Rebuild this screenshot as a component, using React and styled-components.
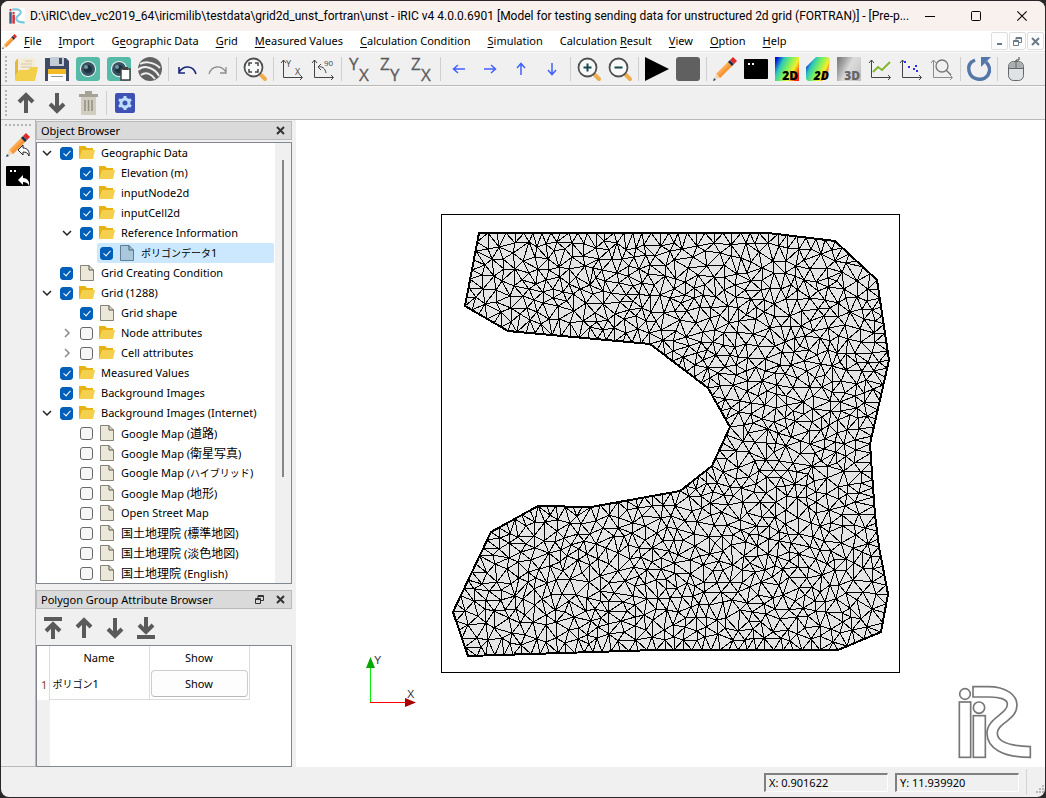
import React, { useMemo } from "react";
import styled, { createGlobalStyle } from "styled-components";

const Global = createGlobalStyle`
  * { box-sizing: border-box; }
  html, body, #root { height: 100%; }
  body {
    margin: 0;
    background: #2b2628;
    color: #000;
    font: 11px/16px "Noto Sans", "Noto Sans CJK JP", sans-serif;
  }
  button { font: inherit; color: inherit; padding: 0; border: 0; background: none; }
  svg { display: block; overflow: visible; }
`;

/* ---------- window frame ---------- */

const Desktop = styled.div`
  height: 100vh;
  padding: 1px;
`;

const Window = styled.div`
  height: 100%;
  display: flex;
  flex-direction: column;
  overflow: hidden;
  border-radius: 8px;
  background: #f0f0f0;
`;

const TitleBar = styled.header`
  display: flex;
  align-items: center;
  height: 30px;
  flex: none;
  padding-left: 8px;
  gap: 5px;
  background: #f9f1ee;
`;

const TitleText = styled.h1`
  margin: 0;
  flex: 1;
  min-width: 0;
  font: 400 12px/16px Roboto, "Noto Sans", sans-serif;
  white-space: nowrap;
`;

const CaptionButton = styled.button`
  width: 46px;
  height: 30px;
  display: grid;
  place-items: center;
`;

const CaptionButtons = styled.div`
  display: flex;
  flex: none;
`;

const MenuBar = styled.nav`
  display: flex;
  align-items: center;
  flex: none;
  height: 21px;
  padding: 0 1px;
  background: #fff;
  border-bottom: 1px solid #e4e4e4;
`;

const MenuList = styled.div`
  display: flex;
  flex: 1;
  gap: 17px;
  padding-left: 7px;
`;

const MenuItem = styled.button`
  white-space: nowrap;
  u { text-underline-offset: 2px; }
`;

const ChildButtons = styled.div`
  display: flex;
  gap: 1px;
`;

const ChildButton = styled.button`
  width: 17px;
  height: 18px;
  display: grid;
  place-items: center;
  border: 1px solid #dedede;
  border-radius: 2px;
  background: #fdfdfd;
`;

/* ---------- toolbars ---------- */

const Toolbar = styled.div`
  display: flex;
  align-items: center;
  flex: none;
  height: 34px;
  padding-left: 4px;
  border-top: 1px solid #fafafa;
  border-bottom: 1px solid #b9b9b9;
`;

const Grip = styled.div`
  width: 2px;
  height: 26px;
  margin-right: 7px;
  background: repeating-linear-gradient(#b4b4b4 0 2px, transparent 2px 4px);
`;

const ToolGroup = styled.div`
  display: flex;
  gap: 7px;
`;

const ToolButton = styled.button`
  width: 24px;
  height: 24px;
`;

const Separator = styled.div`
  width: 1px;
  height: 24px;
  margin: 0 6px;
  background: #cfcfcf;
`;

const Workspace = styled.div`
  display: flex;
  flex: 1;
  min-height: 0;
`;

const SideBar = styled.div`
  display: flex;
  flex-direction: column;
  align-items: center;
  flex: none;
  width: 35px;
  padding-top: 4px;
  gap: 7px;
  border-right: 1px solid #b9b9b9;
  border-bottom: 1px solid #b9b9b9;
`;

const SideGrip = styled.div`
  width: 26px;
  height: 2px;
  background: repeating-linear-gradient(90deg, #b4b4b4 0 2px, transparent 2px 4px);
`;

/* ---------- docks ---------- */

const Docks = styled.aside`
  display: flex;
  flex-direction: column;
  flex: none;
  width: 256px;
  margin-right: 4px;
  padding-top: 1px;
`;

const DockTitle = styled.div`
  display: flex;
  align-items: center;
  flex: none;
  height: 19px;
  padding: 0 6px 0 4px;
  gap: 12px;
  border: 1px solid #bababa;
  background: #dadada;
`;

const DockName = styled.h2`
  flex: 1;
  margin: 0;
  font-size: 11px;
  font-weight: 400;
  white-space: nowrap;
`;

const TreeFrame = styled.div`
  display: flex;
  flex: 1;
  min-height: 0;
  margin: 2px 0 6px;
  overflow: hidden;
  border: 1px solid #828790;
  background: #fff;
`;

const Tree = styled.ul`
  flex: 1;
  margin: 0;
  padding: 0;
  list-style: none;
`;

const TreeRow = styled.li`
  display: flex;
  height: 20px;
  padding-left: ${(p) => p.$level * 20}px;
`;

const Expander = styled.div`
  width: 20px;
  flex: none;
  display: grid;
  place-items: center;
`;

const TreeItem = styled.label`
  display: flex;
  flex: 1;
  align-items: center;
  padding-left: 3px;
  margin-right: 1px;
  border-radius: 2px;
  white-space: nowrap;
  background: ${(p) => (p.$selected ? "#cce8ff" : "transparent")};
  svg { margin: 0 5px 0 6px; flex: none; }
`;

const CheckBox = styled.input`
  appearance: none;
  position: relative;
  flex: none;
  width: 13px;
  height: 13px;
  margin: 0;
  border: 1px solid #666;
  border-radius: 3px;
  background: #f6f6f6;
  &:checked { border-color: #005fb8; background: #005fb8; }
  &:checked::after {
    content: "";
    position: absolute;
    left: 4px;
    top: 1px;
    width: 3px;
    height: 6px;
    border: solid #fff;
    border-width: 0 1px 1px 0;
    transform: rotate(42deg);
  }
`;

const Kanji = styled.span`
  font-size: 12px;
  font-family: "Noto Sans CJK JP", sans-serif;
`;

const Kana = styled.span`
  font-size: 10px;
  font-family: "Noto Sans CJK JP", sans-serif;
`;

const ScrollTrack = styled.div`
  width: 16px;
  flex: none;
  padding: 17px 7px 0;
  background: #f0f0f0;
`;

const ScrollThumb = styled.div`
  width: 2px;
  height: 75%;
  background: #868686;
`;

const DockTools = styled.div`
  display: flex;
  align-items: center;
  flex: none;
  height: 36px;
  padding: 2px 0 0 5px;
  gap: 7px;
`;

const TableFrame = styled.div`
  display: flex;
  flex: none;
  height: 122px;
  border: 1px solid #828790;
  background: linear-gradient(90deg, #f0f0f0 13px, #fff 13px);
`;

const Table = styled.table`
  width: 212px;
  align-self: flex-start;
  table-layout: fixed;
  border-collapse: collapse;
  background: #fff;
`;

const HeadCell = styled.th`
  width: ${(p) => (p.$narrow ? 12 : 100)}px;
  height: 23px;
  padding: 0;
  font-weight: 400;
  border-right: 1px solid #dcdcdc;
`;

const RowHead = styled.th`
  padding: 2px 0 0 4px;
  font-weight: 400;
  text-align: left;
  color: #7b4a1c;
`;

const Cell = styled.td`
  height: 30px;
  padding: ${(p) => (p.$flush ? "1px" : "0 3px")};
  border: 1px solid #dcdcdc;
  border-top: 0;
`;

const ShowButton = styled.button`
  display: block;
  width: 97px;
  height: 27px;
  border: 1px solid #cdcdcd;
  border-bottom-color: #b8b8b8;
  border-radius: 4px;
  background: #fdfdfd;
`;

/* ---------- canvas and status bar ---------- */

const View = styled.main`
  position: relative;
  flex: 1;
  min-width: 0;
  background: #fff;
`;

const MeshDrawing = styled.svg`
  width: 100%;
  height: 100%;
`;

const Watermark = styled.svg`
  position: absolute;
  right: 13px;
  bottom: 8px;
  width: 74px;
  height: 74px;
`;

const StatusBar = styled.footer`
  display: flex;
  align-items: center;
  justify-content: flex-end;
  flex: none;
  height: 30px;
  gap: 7px;
`;

const StatusField = styled.output`
  width: 124px;
  height: 19px;
  padding: 0 3px;
  border: 1px solid #fff;
  border-top: 2px solid #808080;
  border-left: 2px solid #808080;
`;

const StatusEnd = styled.div`
  display: flex;
  align-items: flex-end;
  justify-content: flex-end;
  width: 19px;
  height: 26px;
  border-left: 1px solid #d4d4d4;
`;

/* ---------- mesh ---------- */

const OUTLINE = [
  [183, 113], [472, 113], [539, 121], [581, 160], [593, 240], [574, 324],
  [579, 395], [583, 427], [592, 474], [585, 512], [542, 530], [360, 530],
  [172, 536], [157, 492], [195, 412], [242, 386], [295, 387], [384, 371],
  [416, 346], [434, 307], [412, 268], [354, 224], [212, 211], [169, 186],
];
const NODE_COUNT = 1288;

const inside = (x, y) => {
  let hit = false;
  for (let i = 0, j = OUTLINE.length - 1; i < OUTLINE.length; j = i++) {
    const [xi, yi] = OUTLINE[i];
    const [xj, yj] = OUTLINE[j];
    if (yi > y !== yj > y && x < ((xj - xi) * (y - yi)) / (yj - yi) + xi) hit = !hit;
  }
  return hit;
};

function scatterNodes() {
  const nodes = [];
  OUTLINE.forEach(([x, y], i) => {
    const [nx, ny] = OUTLINE[(i + 1) % OUTLINE.length];
    const steps = Math.max(1, Math.round(Math.hypot(nx - x, ny - y) / 9));
    for (let k = 0; k < steps; k++) {
      nodes.push([x + ((nx - x) * k) / steps, y + ((ny - y) * k) / steps]);
    }
  });
  let seed = 20191;
  const random = () => {
    seed = (seed * 1664525 + 1013904223) % 4294967296;
    return seed / 4294967296;
  };
  let spacing = 9.4;
  for (let tries = 0; tries < 24000 && nodes.length < NODE_COUNT; tries++) {
    if (tries % 6000 === 5999) spacing -= 0.25;
    const x = 157 + random() * 436;
    const y = 113 + random() * 423;
    if (!inside(x, y)) continue;
    if (nodes.every(([a, b]) => (a - x) ** 2 + (b - y) ** 2 > spacing * spacing)) nodes.push([x, y]);
  }
  return nodes;
}

function triangulate(nodes) {
  const pts = [...nodes.map(([x, y], i) => [x + ((i * 7) % 11) * 0.001, y + ((i * 5) % 13) * 0.001]),
    [-4000, -3000], [5000, -3000], [400, 6000]];
  const n = nodes.length;
  const make = (a, b, c) => {
    const [ax, ay] = pts[a];
    const [bx, by] = pts[b];
    const [cx, cy] = pts[c];
    const d = 2 * (ax * (by - cy) + bx * (cy - ay) + cx * (ay - by));
    const A = ax * ax + ay * ay;
    const B = bx * bx + by * by;
    const C = cx * cx + cy * cy;
    const x = (A * (by - cy) + B * (cy - ay) + C * (ay - by)) / d;
    const y = (A * (cx - bx) + B * (ax - cx) + C * (bx - ax)) / d;
    return { v: [a, b, c], x, y, r: (ax - x) ** 2 + (ay - y) ** 2 };
  };
  let tris = [make(n, n + 1, n + 2)];
  for (let i = 0; i < n; i++) {
    const [x, y] = pts[i];
    const edges = new Map();
    const keep = [];
    for (const t of tris) {
      if ((t.x - x) ** 2 + (t.y - y) ** 2 < t.r) {
        for (let k = 0; k < 3; k++) {
          const a = t.v[k];
          const b = t.v[(k + 1) % 3];
          const key = a < b ? a * 10000 + b : b * 10000 + a;
          if (edges.has(key)) edges.delete(key);
          else edges.set(key, [a, b]);
        }
      } else keep.push(t);
    }
    edges.forEach(([a, b]) => keep.push(make(a, b, i)));
    tris = keep;
  }
  return tris.filter(({ v }) => v.every((k) => k < n)
    && inside((pts[v[0]][0] + pts[v[1]][0] + pts[v[2]][0]) / 3, (pts[v[0]][1] + pts[v[1]][1] + pts[v[2]][1]) / 3));
}

function meshPath() {
  const nodes = scatterNodes();
  const seen = new Set();
  let d = "";
  triangulate(nodes).forEach(({ v }) => {
    for (let k = 0; k < 3; k++) {
      const a = Math.min(v[k], v[(k + 1) % 3]);
      const b = Math.max(v[k], v[(k + 1) % 3]);
      const key = a * 10000 + b;
      if (seen.has(key)) continue;
      seen.add(key);
      const [p, q] = [nodes[a], nodes[b]];
      d += `M${Math.round(p[0])} ${Math.round(p[1])}L${Math.round(q[0])} ${Math.round(q[1])}`;
    }
  });
  return d;
}

function MeshView() {
  const mesh = useMemo(meshPath, []);
  const outline = OUTLINE.map((p) => p.join(",")).join(" ");
  return (
    <MeshDrawing viewBox="0 0 749 647" role="img" aria-label="Grid">
      <g shapeRendering="crispEdges" fill="none" stroke="#000">
        <rect x="145.5" y="94.5" width="458" height="458" />
        <polygon points={outline} fill="#e5e5e5" stroke="none" />
        <path d={mesh} />
        <polygon points={outline} strokeWidth="2" />
        <path d="M74.5 582V545" stroke="#00f000" />
        <path d="M74 582.5H110" stroke="#f00" />
      </g>
      <path d="M74.500 537L79 548H70Z" fill="#00a800" />
      <path d="M120 582.500L109 578V587Z" fill="#a80000" />
      <g fill="#333" fontFamily="Liberation Sans, sans-serif" fontSize="11">
        <text x="78" y="544">Y</text>
        <text x="111" y="578">X</text>
      </g>
    </MeshDrawing>
  );
}

const R_SHAPE = "M700 50H745C800 50 832 75 832 105C832 130 815 143 800 155C785 167 773 175 773 190C773 215 810 228 872 230V262C790 262 742 235 742 190C742 165 760 150 778 136C795 122 803 115 803 102C803 88 780 80 745 81H700Z";

function LogoShapes() {
  return (
    <>
      <g className="i">
        <circle cx="676" cy="72" r="16" />
        <rect x="659" y="96" width="34" height="166" />
        <circle cx="718" cy="113" r="17" />
        <rect x="701" y="137" width="36" height="125" />
      </g>
      <path d={R_SHAPE} className="r" />
    </>
  );
}

const AppLogo = styled.svg`
  width: 16px;
  height: 16px;
  flex: none;
  background: #fff;
  .i rect:nth-of-type(1) { fill: #2f5d8c; }
  .i { fill: #d8343c; }
  .r { fill: #7cc8e0; }
`;

/* ---------- icons ---------- */

const Icon = ({ children, size = 24 }) => (
  <svg width={size} height={size} viewBox="0 0 24 24" fill="none" aria-hidden="true">{children}</svg>
);

const Pencil = () => (
  <>
    <path d="M3 17L16 4L20 8L7 21Z" fill="#ffa94d" />
    <path d="M5 19L18 6L20 8L7 21Z" fill="#f5953a" />
    <path d="M3 17L7 21L1 23Z" fill="#f3d9b5" />
    <path d="M1 21L0 24L3 23Z" fill="#1d4a6b" />
    <path d="M15 5L17 3L21 7L19 9Z" fill="#15304d" />
    <path d="M17 3L20 0L24 4L21 7Z" fill="#e02a2a" />
  </>
);
const Axes = ({ color = "#444" }) => (
  <path d="M3.500 3V20.500H22M1 6L3.500 3L6 6M20 18L22.500 20.500L20 23" stroke={color} />
);
const Arrow = ({ turn = 0 }) => (
  <path d="M12 22V4M5 11L12 4L19 11" stroke="#5a5a5a" strokeWidth="4" transform={`rotate(${turn} 12 12)`} />
);
const BlueArrow = ({ turn }) => (
  <path d="M12 18V7M8 11L12 6.500L16 11" stroke="#4262ff" strokeWidth="1.500" transform={`rotate(${turn} 12 12)`} />
);
const Lens = ({ children }) => (
  <>
    <path d="M17 17L22 22" stroke="#f0ad4e" strokeWidth="4" strokeLinecap="round" />
    <circle cx="10.500" cy="10.500" r="9" fill="#f7f9f9" stroke="#505050" strokeWidth="1.800" />
    {children}
  </>
);
const Camera = () => (
  <>
    <rect width="24" height="24" rx="3" fill="#55bba8" />
    <circle cx="12" cy="12" r="8" fill="#f3f3f3" />
    <circle cx="12" cy="12" r="7" fill="#365563" />
    <circle cx="12" cy="12" r="4" fill="#1d3340" />
    <circle cx="10" cy="10" r="2" fill="#7897a5" />
  </>
);
const TwoLetters = ({ a, b }) => (
  <g fill="#5c5c5c" stroke="#5c5c5c" strokeWidth="0.3" fontFamily="Open Sans, sans-serif" fontSize="17">
    <text x="1" y="13">{a}</text>
    <text x="11" y="24">{b}</text>
  </g>
);
const Spectrum = ({ id, grey }) => (
  <linearGradient id={id} x1="0" y1="0.200" x2="1" y2="0.700">
    {(grey ? ["#808080", "#a8a8a8", "#dcdcdc", "#d2d2d2", "#c0c0c0"] : ["#0010e0", "#2fc8b8", "#7cf060", "#f4f028", "#ff2010"])
      .map((c, i) => <stop key={c} offset={i / 4} stopColor={c} />)}
  </linearGradient>
);
const DimLabel = ({ children, color = "#000", slant }) => (
  <text x="23" y="23" textAnchor="end" fill={color} fontFamily="Open Sans, sans-serif" fontSize="12" fontWeight="800" fontStyle={slant ? "italic" : "normal"}>{children}</text>
);
const Console = () => (
  <>
    <rect y="2" width="24" height="20" rx="1" fill="#000" />
    <path d="M4 6H6V8H4ZM8 6H10V8H8Z" fill="#fff" />
  </>
);

const ICONS = {
  open: (
    <>
      <path d="M1 5L3 2H9L11 5V22H1Z" fill="#e2b73a" />
      <path d="M4 1H21V18H4Z" fill="#f4ecd8" />
      <path d="M11 4H18M7 7H18M7 10H18" stroke="#d8c8a4" />
      <path d="M1 23V19L5 13H14L17 10H24L21 24H2Z" fill="#f2d04c" />
    </>
  ),
  save: (
    <>
      <path d="M0 1H21L24 4V24H0Z" fill="#3f4a66" />
      <path d="M5 0H19V9H5Z" fill="#c4ccd4" />
      <path d="M14 1H17V7H14Z" fill="#3f4a66" />
      <path d="M3 12H21V24H3Z" fill="#fff" />
      <path d="M3 12H21V17H3Z" fill="#f2bb25" />
      <path d="M6 19.500H18" stroke="#8a93a0" />
    </>
  ),
  camera: <Camera />,
  cameraCopy: (
    <>
      <Camera />
      <path d="M14 12H23V23H14Z" fill="#fff" stroke="#444" strokeWidth="1.500" />
      <path d="M16 10H21V13H16Z" fill="#444" />
    </>
  ),
  earth: (
    <>
      <circle cx="12" cy="12" r="12" fill="#626262" />
      <path d="M2 7C7 4 16 5 22 11M0 13C6 7 17 11 21 19M3 18C8 14 13 17 17 22" stroke="#f0f0f0" strokeWidth="2" />
    </>
  ),
  undo: <path d="M4 10V16H10M4 15C9 8 18 8 21 17" stroke="#16267e" strokeWidth="1.600" />,
  redo: <path d="M20 10V16H14M20 15C15 8 6 8 3 17" stroke="#8d8d8d" strokeWidth="1.300" />,
  fit: (
    <Lens>
      <path d="M6 9V6H9M12 6H15V9M15 12V15H12M9 15H6V12" stroke="#444" strokeWidth="1.500" />
    </Lens>
  ),
  xy: (
    <>
      <Axes />
      <g fill="#444" fontFamily="Open Sans, sans-serif" fontSize="9">
        <text x="6" y="10">Y</text>
        <text x="15" y="18">X</text>
      </g>
    </>
  ),
  rotate90: (
    <>
      <Axes />
      <path d="M15 16C14 11 11 9 7 10M10 7L7 10L10 13" stroke="#444" />
      <text x="13" y="9" fill="#444" fontFamily="Open Sans, sans-serif" fontSize="8">90</text>
    </>
  ),
  yx: <TwoLetters a="Y" b="X" />,
  zy: <TwoLetters a="Z" b="Y" />,
  zx: <TwoLetters a="Z" b="X" />,
  left: <BlueArrow turn={270} />,
  right: <BlueArrow turn={90} />,
  up: <BlueArrow turn={0} />,
  down: <BlueArrow turn={180} />,
  zoomIn: <Lens><path d="M6.500 10.500H14.500M10.500 6.500V14.500" stroke="#17494d" strokeWidth="2" /></Lens>,
  zoomOut: <Lens><path d="M6.500 10.500H14.500" stroke="#17494d" strokeWidth="2" /></Lens>,
  play: <path d="M0 0L24 12L0 24Z" fill="#000" />,
  stop: <rect width="24" height="24" rx="3" fill="#606060" />,
  pencil: <Pencil />,
  console: <Console />,
  post2d: (
    <>
      <Spectrum id="spectrum" />
      <path d="M0 0H24V24H0Z" fill="url(#spectrum)" />
      <DimLabel>2D</DimLabel>
    </>
  ),
  post2dBird: (
    <>
      <Spectrum id="spectrumBird" />
      <path d="M10 0H22L24 2L22 17L16 24H2L0 22V10Z" fill="url(#spectrumBird)" />
      <DimLabel slant>2D</DimLabel>
    </>
  ),
  post3d: (
    <>
      <Spectrum id="greys" grey />
      <path d="M0 0H24V24H0Z" fill="url(#greys)" />
      <DimLabel color="#666">3D</DimLabel>
    </>
  ),
  chart: <><Axes /><path d="M5 15L10 10L14 13L22 5" stroke="#7fb82e" strokeWidth="2" /></>,
  scatter: <><Axes /><path d="M5 4H7V6H5ZM9 9H11V11H9ZM14 11H16V13H14ZM16 8H18V10H16ZM17 13H19V15H17Z" fill="#2b30e8" /></>,
  verify: (
    <>
      <Axes color="#8c8c8c" />
      <circle cx="12" cy="9" r="6" stroke="#777" strokeWidth="1.300" />
      <path d="M16 13L21 18" stroke="#777" strokeWidth="1.500" />
    </>
  ),
  reload: (
    <>
      <path d="M8 3C3 5 1 9 2 14C4 23 16 25 21 18C24 13 22 8 19 5" stroke="#5576a8" strokeWidth="3.500" />
      <path d="M14 0H24L14 10Z" fill="#5576a8" />
    </>
  ),
  mouse: (
    <>
      <path d="M12 6V3H15V0" stroke="#444" />
      <rect x="4.500" y="4.500" width="15" height="19" rx="5" fill="#dfe3e5" stroke="#666" />
      <path d="M5 11V8Q6 5 9 5H15Q19 5 19 11Z" fill="#a9aeb0" />
      <path d="M4.500 11.500H19.500M12 5V11" stroke="#666" />
    </>
  ),
  moveUp: <Arrow />,
  moveDown: <Arrow turn={180} />,
  trash: (
    <>
      <path d="M5 6H20V24H5Z" fill="#d0cec0" />
      <path d="M3 3H22V6H3ZM9 0H16V3H9Z" fill="#a5a395" />
      <path d="M9 9V20M12.500 9V20M16 9V20" stroke="#948e80" strokeWidth="1.500" />
    </>
  ),
  gear: (
    <>
      <rect x="2" y="2" width="20" height="20" rx="2" fill="#3f51b5" />
      <circle cx="12" cy="12" r="4" stroke="#bbdefb" strokeWidth="3" />
      <path d="M12 5V8M12 16V19M5.900 8.500L8.500 10M15.500 14L18.100 15.500M5.900 15.500L8.500 14M15.500 10L18.100 8.500" stroke="#bbdefb" strokeWidth="3" />
    </>
  ),
  pencilBack: (
    <>
      <Pencil />
      <path d="M12 17L17 12V15C21 15 24 18 23 23C22 20 20 19 17 19V22Z" fill="#fff" stroke="#222" />
    </>
  ),
  consoleBack: (
    <>
      <Console />
      <path d="M12 16L17 11V14C21 14 24 17 23 22C22 19 20 18 17 18V21Z" fill="#fff" />
    </>
  ),
  toTop: (
    <>
      <path d="M3 3H21" stroke="#5a5a5a" strokeWidth="4" />
      <path d="M12 23V8M5 15L12 8L19 15" stroke="#5a5a5a" strokeWidth="4" />
    </>
  ),
  toBottom: (
    <>
      <path d="M3 21H21" stroke="#5a5a5a" strokeWidth="4" />
      <path d="M12 1V16M5 9L12 16L19 9" stroke="#5a5a5a" strokeWidth="4" />
    </>
  ),
};

const MAIN_TOOLS = [
  ["open", "save", "camera", "cameraCopy", "earth"],
  ["undo", "redo"],
  ["fit"],
  ["xy", "rotate90"],
  ["yx", "zy", "zx"],
  ["left", "right", "up", "down"],
  ["zoomIn", "zoomOut"],
  ["play", "stop"],
  ["pencil", "console", "post2d", "post2dBird", "post3d", "chart", "scatter", "verify"],
  ["reload"],
  ["mouse"],
];
const EDIT_TOOLS = [["moveUp", "moveDown", "trash"], ["gear"]];

const Tool = ({ name }) => (
  <ToolButton type="button" aria-label={name}><Icon>{ICONS[name]}</Icon></ToolButton>
);

const ToolbarRow = ({ groups }) => (
  <Toolbar role="toolbar">
    <Grip />
    {groups.map((names, i) => (
      <React.Fragment key={names[0]}>
        {i > 0 && <Separator />}
        <ToolGroup>{names.map((name) => <Tool key={name} name={name} />)}</ToolGroup>
      </React.Fragment>
    ))}
  </Toolbar>
);

const Folder = () => (
  <svg width="17" height="14" viewBox="0 0 17 14" aria-hidden="true">
    <path d="M0 0H6L8 2H14V13H0Z" fill="#e8b214" />
    <path d="M3 4H16L14 13H0Z" fill="#f4d04e" />
  </svg>
);
const Sheet = ({ blue }) => (
  <svg width="17" height="17" viewBox="0 0 17 17" aria-hidden="true">
    <path d="M1.500 0.500H10L14.500 5V15.500H1.500Z" fill={blue ? "#a9c8dc" : "#ece8d9"} stroke={blue ? "#5d7f96" : "#858478"} />
    <path d="M10 0.500V5H14.500" fill="none" stroke={blue ? "#44606f" : "#55554d"} />
  </svg>
);
const Chevron = ({ open }) => (
  <svg width="10" height="10" viewBox="0 0 10 10" fill="none" aria-hidden="true">
    {open
      ? <path d="M1 3L5 7L9 3" stroke="#222" strokeWidth="1.500" />
      : <path d="M3 1L7 5L3 9" stroke="#8a8a8a" strokeWidth="1.500" />}
  </svg>
);
const Cross = ({ size = 9, width = 2, color = "#333" }) => (
  <svg width={size} height={size} viewBox="0 0 9 9" aria-hidden="true">
    <path d="M1 1L8 8M8 1L1 8" stroke={color} strokeWidth={width} />
  </svg>
);
const Restore = ({ color = "#333" }) => (
  <svg width="9" height="9" viewBox="0 0 9 9" fill="none" stroke={color} aria-hidden="true">
    <path d="M3 3V0.500H8.500V5.500H6M3 1.500H8M0.500 3.500H5.500V8.500H0.500ZM1 4.500H5" />
  </svg>
);

const TREE = [
  { level: 0, open: true, on: true, folder: true, text: "Geographic Data" },
  { level: 1, on: true, folder: true, text: "Elevation (m)" },
  { level: 1, on: true, folder: true, text: "inputNode2d" },
  { level: 1, on: true, folder: true, text: "inputCell2d" },
  { level: 1, open: true, on: true, folder: true, text: "Reference Information" },
  { level: 2, on: true, selected: true, text: <span><Kana>ポリゴンデータ</Kana>1</span> },
  { level: 0, on: true, text: "Grid Creating Condition" },
  { level: 0, open: true, on: true, folder: true, text: "Grid (1288)" },
  { level: 1, on: true, text: "Grid shape" },
  { level: 1, open: false, folder: true, text: "Node attributes" },
  { level: 1, open: false, folder: true, text: "Cell attributes" },
  { level: 0, on: true, folder: true, text: "Measured Values" },
  { level: 0, on: true, folder: true, text: "Background Images" },
  { level: 0, open: true, on: true, folder: true, text: "Background Images (Internet)" },
  { level: 1, text: <span>Google Map (<Kanji>道路</Kanji>)</span> },
  { level: 1, text: <span>Google Map (<Kanji>衛星写真</Kanji>)</span> },
  { level: 1, text: <span>Google Map (<Kana>ハイブリッド</Kana>)</span> },
  { level: 1, text: <span>Google Map (<Kanji>地形</Kanji>)</span> },
  { level: 1, text: "Open Street Map" },
  { level: 1, text: <span><Kanji>国土地理院</Kanji> (<Kanji>標準地図</Kanji>)</span> },
  { level: 1, text: <span><Kanji>国土地理院</Kanji> (<Kanji>淡色地図</Kanji>)</span> },
  { level: 1, text: <span><Kanji>国土地理院</Kanji> (English)</span> },
];

const MENUS = [
  ["", "F", "ile"], ["", "I", "mport"], ["G", "e", "ographic Data"], ["", "G", "rid"],
  ["", "M", "easured Values"], ["", "C", "alculation Condition"], ["", "S", "imulation"],
  ["Calculation ", "R", "esult"], ["", "V", "iew"], ["", "O", "ption"], ["", "H", "elp"],
];

export default function App() {
  return (
    <Desktop>
      <Global />
      <Window>
        <TitleBar>
          <AppLogo viewBox="655 45 222 222"><LogoShapes /></AppLogo>
          <TitleText>
            {"D:\\iRIC\\dev_vc2019_64\\iricmilib\\testdata\\grid2d_unst_fortran\\unst - iRIC v4 4.0.0.6901 [Model for testing sending data for unstructured 2d grid (FORTRAN)] - [Pre-p..."}
          </TitleText>
          <CaptionButtons>
            <CaptionButton type="button" aria-label="Minimize">
              <svg width="10" height="10"><path d="M0 5.500H10" stroke="#000" /></svg>
            </CaptionButton>
            <CaptionButton type="button" aria-label="Maximize">
              <svg width="10" height="10"><rect x="0.500" y="0.500" width="9" height="9" rx="1" fill="none" stroke="#000" /></svg>
            </CaptionButton>
            <CaptionButton type="button" aria-label="Close"><Cross size={12} width={0.8} color="#000" /></CaptionButton>
          </CaptionButtons>
        </TitleBar>

        <MenuBar>
          <Icon size={15}><Pencil /></Icon>
          <MenuList>
            {MENUS.map(([pre, key, post]) => (
              <MenuItem type="button" key={pre + key + post}>{pre}<u>{key}</u>{post}</MenuItem>
            ))}
          </MenuList>
          <ChildButtons>
            <ChildButton type="button" aria-label="Minimize view">
              <svg width="9" height="9"><path d="M2 7H7" stroke="#6b7a8a" strokeWidth="2" /></svg>
            </ChildButton>
            <ChildButton type="button" aria-label="Restore view"><Restore color="#6b7a8a" /></ChildButton>
            <ChildButton type="button" aria-label="Close view"><Cross color="#6b7a8a" /></ChildButton>
          </ChildButtons>
        </MenuBar>

        <ToolbarRow groups={MAIN_TOOLS} />
        <ToolbarRow groups={EDIT_TOOLS} />

        <Workspace>
          <SideBar>
            <SideGrip />
            <Tool name="pencilBack" />
            <Tool name="consoleBack" />
          </SideBar>

          <Docks>
            <DockTitle>
              <DockName>Object Browser</DockName>
              <button type="button" aria-label="Close Object Browser"><Cross /></button>
            </DockTitle>
            <TreeFrame>
              <Tree>
                {TREE.map((row, i) => (
                  <TreeRow key={i} $level={row.level}>
                    <Expander>{row.open !== undefined && <Chevron open={row.open} />}</Expander>
                    <TreeItem $selected={row.selected}>
                      <CheckBox type="checkbox" defaultChecked={!!row.on} />
                      {row.folder ? <Folder /> : <Sheet blue={row.selected} />}
                      {row.text}
                    </TreeItem>
                  </TreeRow>
                ))}
              </Tree>
              <ScrollTrack><ScrollThumb /></ScrollTrack>
            </TreeFrame>

            <DockTitle>
              <DockName>Polygon Group Attribute Browser</DockName>
              <button type="button" aria-label="Float"><Restore /></button>
              <button type="button" aria-label="Close Attribute Browser"><Cross /></button>
            </DockTitle>
            <DockTools>
              <Tool name="toTop" />
              <Tool name="moveUp" />
              <Tool name="moveDown" />
              <Tool name="toBottom" />
            </DockTools>
            <TableFrame>
              <Table>
                <thead>
                  <tr>
                    <HeadCell $narrow />
                    <HeadCell>Name</HeadCell>
                    <HeadCell>Show</HeadCell>
                  </tr>
                </thead>
                <tbody>
                  <tr>
                    <RowHead>1</RowHead>
                    <Cell><Kana>ポリゴン</Kana>1</Cell>
                    <Cell $flush><ShowButton type="button">Show</ShowButton></Cell>
                  </tr>
                </tbody>
              </Table>
            </TableFrame>
          </Docks>

          <View>
            <MeshView />
            <Watermark viewBox="655 45 222 222" fill="none" stroke="#777" strokeWidth="5"><LogoShapes /></Watermark>
          </View>
        </Workspace>

        <StatusBar>
          <StatusField>X: 0.901622</StatusField>
          <StatusField>Y: 11.939920</StatusField>
          <StatusEnd>
            <svg width="10" height="10" fill="#b8b8b8" aria-hidden="true">
              <path d="M7 0H9V2H7ZM4 3H6V5H4ZM7 3H9V5H7ZM1 6H3V8H1ZM4 6H6V8H4ZM7 6H9V8H7Z" />
            </svg>
          </StatusEnd>
        </StatusBar>
      </Window>
    </Desktop>
  );
}
